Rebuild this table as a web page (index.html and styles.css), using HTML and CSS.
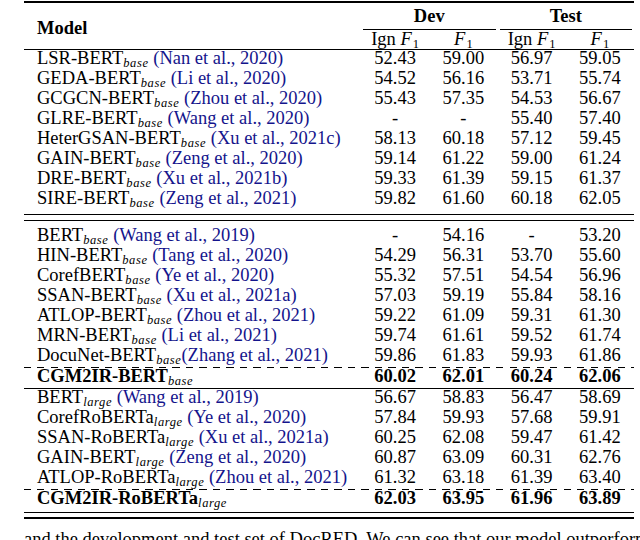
FILE: index.html
```html
<!DOCTYPE html>
<html lang="en">
<head>
<meta charset="utf-8">
<title>DocRED results</title>
<link rel="stylesheet" href="styles.css">
</head>
<body>
<div class="page">
<table class="results">
  <colgroup>
    <col class="c-model"><col class="c-num"><col class="c-num"><col class="c-num"><col class="c-num">
  </colgroup>
  <thead>
    <tr class="h1">
      <th rowspan="2" class="model">Model</th>
      <th colspan="2" class="grp"><div class="grp-label">Dev</div></th>
      <th colspan="2" class="grp"><div class="grp-label">Test</div></th>
    </tr>
    <tr class="h2">
      <th>Ign <i>F</i><sub class="one">1</sub></th>
      <th><i>F</i><sub class="one">1</sub></th>
      <th>Ign <i>F</i><sub class="one">1</sub></th>
      <th><i>F</i><sub class="one">1</sub></th>
    </tr>
  </thead>
  <tbody>
    <tr><td class="name">LSR-BERT<sub class="ss">base</sub> <span class="cite">(Nan et al., 2020)</span></td><td>52.43</td><td>59.00</td><td>56.97</td><td>59.05</td></tr>
    <tr><td class="name">GEDA-BERT<sub class="ss">base</sub> <span class="cite">(Li et al., 2020)</span></td><td>54.52</td><td>56.16</td><td>53.71</td><td>55.74</td></tr>
    <tr><td class="name">GCGCN-BERT<sub class="ss">base</sub> <span class="cite">(Zhou et al., 2020)</span></td><td>55.43</td><td>57.35</td><td>54.53</td><td>56.67</td></tr>
    <tr><td class="name">GLRE-BERT<sub class="ss">base</sub> <span class="cite">(Wang et al., 2020)</span></td><td>-</td><td>-</td><td>55.40</td><td>57.40</td></tr>
    <tr><td class="name">HeterGSAN-BERT<sub class="ss">base</sub> <span class="cite">(Xu et al., 2021c)</span></td><td>58.13</td><td>60.18</td><td>57.12</td><td>59.45</td></tr>
    <tr><td class="name">GAIN-BERT<sub class="ss">base</sub> <span class="cite">(Zeng et al., 2020)</span></td><td>59.14</td><td>61.22</td><td>59.00</td><td>61.24</td></tr>
    <tr><td class="name">DRE-BERT<sub class="ss">base</sub> <span class="cite">(Xu et al., 2021b)</span></td><td>59.33</td><td>61.39</td><td>59.15</td><td>61.37</td></tr>
    <tr><td class="name">SIRE-BERT<sub class="ss">base</sub> <span class="cite">(Zeng et al., 2021)</span></td><td>59.82</td><td>61.60</td><td>60.18</td><td>62.05</td></tr>
    <tr class="sep"><td colspan="5"><div class="rule-double"></div></td></tr>
    <tr><td class="name">BERT<sub class="ss">base</sub> <span class="cite">(Wang et al., 2019)</span></td><td>-</td><td>54.16</td><td>-</td><td>53.20</td></tr>
    <tr><td class="name">HIN-BERT<sub class="ss">base</sub> <span class="cite">(Tang et al., 2020)</span></td><td>54.29</td><td>56.31</td><td>53.70</td><td>55.60</td></tr>
    <tr><td class="name">CorefBERT<sub class="ss">base</sub> <span class="cite">(Ye et al., 2020)</span></td><td>55.32</td><td>57.51</td><td>54.54</td><td>56.96</td></tr>
    <tr><td class="name">SSAN-BERT<sub class="ss">base</sub> <span class="cite">(Xu et al., 2021a)</span></td><td>57.03</td><td>59.19</td><td>55.84</td><td>58.16</td></tr>
    <tr><td class="name">ATLOP-BERT<sub class="ss">base</sub> <span class="cite">(Zhou et al., 2021)</span></td><td>59.22</td><td>61.09</td><td>59.31</td><td>61.30</td></tr>
    <tr><td class="name">MRN-BERT<sub class="ss">base</sub> <span class="cite">(Li et al., 2021)</span></td><td>59.74</td><td>61.61</td><td>59.52</td><td>61.74</td></tr>
    <tr><td class="name">DocuNet-BERT<sub class="ss">base</sub><span class="cite">(Zhang et al., 2021)</span></td><td>59.86</td><td>61.83</td><td>59.93</td><td>61.86</td></tr>
    <tr class="sep"><td colspan="5"><div class="rule-dashed"></div></td></tr>
    <tr class="ours"><td class="name"><b>CGM2IR-BERT</b><sub class="ss">base</sub></td><td>60.02</td><td>62.01</td><td>60.24</td><td>62.06</td></tr>
    <tr class="sep"><td colspan="5"><div class="rule-single"></div></td></tr>
    <tr><td class="name">BERT<sub class="ss">large</sub> <span class="cite">(Wang et al., 2019)</span></td><td>56.67</td><td>58.83</td><td>56.47</td><td>58.69</td></tr>
    <tr><td class="name">CorefRoBERTa<sub class="ss">large</sub> <span class="cite">(Ye et al., 2020)</span></td><td>57.84</td><td>59.93</td><td>57.68</td><td>59.91</td></tr>
    <tr><td class="name">SSAN-RoBERTa<sub class="ss">large</sub> <span class="cite">(Xu et al., 2021a)</span></td><td>60.25</td><td>62.08</td><td>59.47</td><td>61.42</td></tr>
    <tr><td class="name">GAIN-BERT<sub class="ss">large</sub> <span class="cite">(Zeng et al., 2020)</span></td><td>60.87</td><td>63.09</td><td>60.31</td><td>62.76</td></tr>
    <tr><td class="name">ATLOP-RoBERTa<sub class="ss">large</sub> <span class="cite">(Zhou et al., 2021)</span></td><td>61.32</td><td>63.18</td><td>61.39</td><td>63.40</td></tr>
    <tr class="sep"><td colspan="5"><div class="rule-dashed"></div></td></tr>
    <tr class="ours"><td class="name"><b>CGM2IR-RoBERTa</b><sub class="ss">large</sub></td><td>62.03</td><td>63.95</td><td>61.96</td><td>63.89</td></tr>
    <tr class="sep"><td colspan="5"><div class="rule-bottom"></div></td></tr>
  </tbody>
</table>
<p class="body-text">and the development and test set of DocRED. We can see that our model outperforms</p>
</div>
</body>
</html>
```

FILE: styles.css
```css
html, body {
  margin: 0;
  padding: 0;
  background: #ffffff;
}

body {
  font-family: "Liberation Serif", "Times New Roman", serif;
  color: #000000;
}

.page {
  padding: 1px 0 0 24px;
  width: 616px;
  height: 539px;
  overflow: hidden;
}

.results {
  border-collapse: separate;
  border-spacing: 0;
  table-layout: fixed;
  width: 610px;
  font-size: 18.5px;
}

.c-model { width: 337px; }
.c-num { width: 68.25px; }

/* header */
.h1 th {
  border-top: 2px solid #000;
  padding: 3px 0 0;
  line-height: 20px;
  font-weight: bold;
}

.model {
  text-align: left;
  padding-left: 13px !important;
  vertical-align: middle;
  border-bottom: 1px solid #000;
}

.grp-label {
  margin: 0 2px;
  padding-bottom: 3px;
  border-bottom: 1px solid #000;
  text-align: center;
}

.h2 th {
  font-weight: normal;
  line-height: 16px;
  padding: 1px 0 2px;
  border-bottom: 1px solid #000;
  text-align: center;
  white-space: nowrap;
}

.one {
  font-size: 12.5px;
  font-style: normal;
  line-height: 0;
  vertical-align: -3px;
  margin-left: 1px;
}

/* body */
.results td {
  line-height: 17px;
  padding: 0 0 3px;
  text-align: center;
  white-space: nowrap;
}

.results td.name {
  text-align: left;
  padding-left: 13px;
}

.ss {
  font-size: 12.5px;
  font-style: italic;
  line-height: 0;
  vertical-align: -3px;
  letter-spacing: 0.6px;
}

.cite {
  color: #14148c;
}

.ours td {
  font-weight: bold;
}

.ours .ss {
  font-weight: normal;
}

/* rules */
.results tr.sep td {
  padding: 0;
  line-height: 0;
}

.rule-double {
  margin: 4px 0 6px;
  height: 5px;
  border-top: 1px solid #000;
  border-bottom: 1px solid #000;
}

.rule-dashed {
  height: 1px;
  background: repeating-linear-gradient(to right, #000 0 7px, transparent 7px 13.5px);
}

.rule-single {
  height: 1px;
  background: #000;
}

.rule-bottom {
  margin-top: 2px;
  height: 4px;
  border-top: 1px solid #000;
  border-bottom: 2px solid #000;
}

.body-text {
  margin: 10px 0 0;
  font-size: 18.5px;
  line-height: 20px;
  white-space: nowrap;
}
```
